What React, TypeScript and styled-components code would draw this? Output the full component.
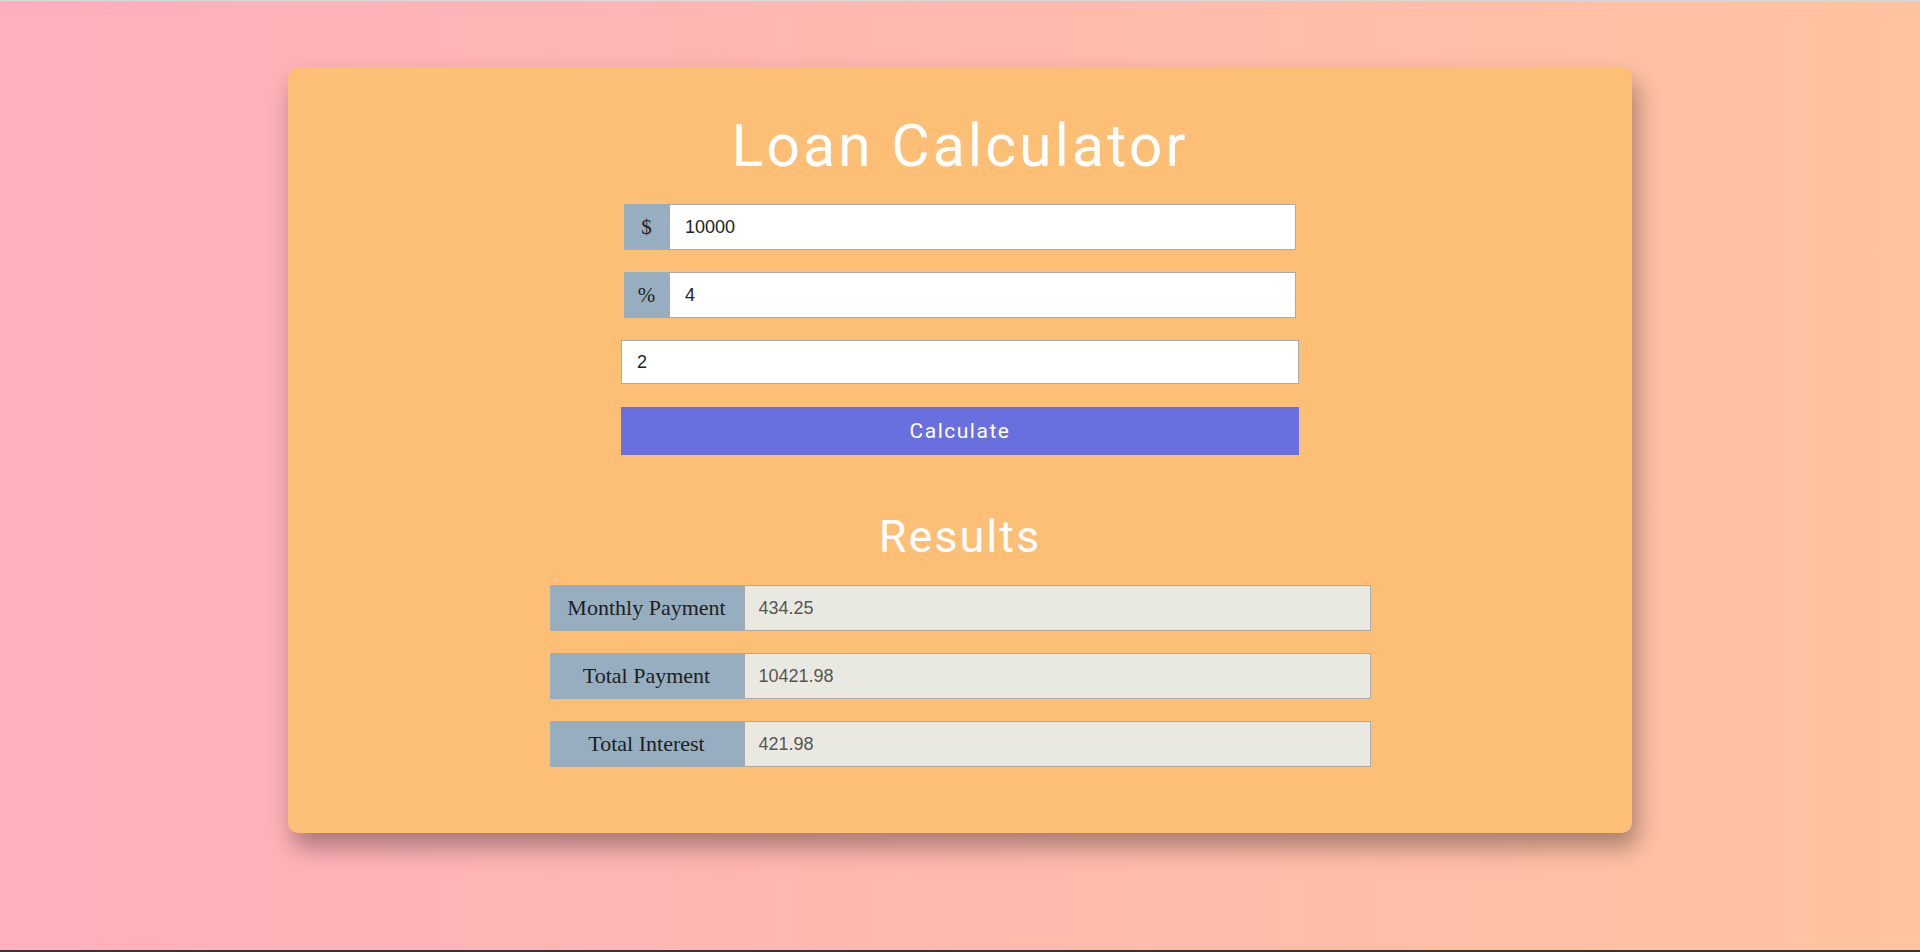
import React from "react";
import styled, { createGlobalStyle } from "styled-components";

const GlobalStyle = createGlobalStyle`
  * { box-sizing: border-box; }
  html {
    background: #343434;
    height: 952px;
  }
  body {
    margin: 0;
    height: 950px;
    border-top: 1px solid #d9d9d9;
    background: linear-gradient(to right, #ffafbd, #ffc3a0);
    font-family: "Liberation Serif", "Times New Roman", serif;
  }
`;

const Page = styled.div`
  padding-top: 66px;
`;

const Card = styled.main`
  width: 1344px;
  margin: 0 auto;
  background: #fdbe76;
  border-radius: 10px;
  box-shadow: 5px 14px 24px rgba(0, 0, 0, 0.34);
  padding: 49px 0 66px;
  display: flex;
  flex-direction: column;
  align-items: center;
`;

const Title = styled.h1`
  margin: 0 0 29px;
  font-family: Roboto, "Liberation Sans", sans-serif;
  font-weight: 400;
  font-size: 59px;
  line-height: 1;
  letter-spacing: 3px;
  color: #ffffff;
`;

const Form = styled.form`
  display: flex;
  flex-direction: column;
  align-items: center;
  gap: 22px;
`;

const InputGroup = styled.div`
  display: flex;
  width: 672px;
  height: 46px;
`;

const Prepend = styled.span`
  width: 45px;
  flex: none;
  display: flex;
  align-items: center;
  justify-content: center;
  background: #97aec0;
  color: #222;
  font-family: "Liberation Serif", "Times New Roman", serif;
  font-size: 21px;
`;

const Field = styled.input<{ $full?: boolean }>`
  flex: ${(p) => (p.$full ? "none" : "1")};
  min-width: 0;
  width: ${(p) => (p.$full ? "678px" : "auto")};
  height: ${(p) => (p.$full ? "44px" : "46px")};
  border: 1px solid #aaaaaa;
  background: #ffffff;
  padding: 0 15px;
  font-family: "Liberation Sans", Arial, sans-serif;
  font-size: 18px;
  color: #222;
  outline: none;
`;

const CalcButton = styled.button`
  width: 678px;
  height: 48px;
  margin-top: 1px;
  border: none;
  background: #6a6fe0;
  color: #ffffff;
  font-family: Roboto, "Liberation Sans", sans-serif;
  font-size: 21px;
  letter-spacing: 1.5px;
  cursor: pointer;
`;

const ResultsTitle = styled.h2`
  margin: 59px 0 26px;
  font-family: Roboto, "Liberation Sans", sans-serif;
  font-weight: 400;
  font-size: 45px;
  line-height: 1;
  letter-spacing: 2px;
  color: #ffffff;
`;

const Results = styled.section`
  display: flex;
  flex-direction: column;
  gap: 22px;
`;

const ResultRow = styled.div`
  display: flex;
  width: 821px;
  height: 46px;
`;

const ResultLabel = styled.span`
  width: 194px;
  flex: none;
  display: flex;
  align-items: center;
  justify-content: center;
  background: #97aec0;
  color: #1e1e1e;
  font-family: "Liberation Serif", "Times New Roman", serif;
  font-size: 22px;
`;

const ResultValue = styled.input`
  flex: 1;
  min-width: 0;
  height: 46px;
  border: 1px solid #aaaaaa;
  background: #eae9e1;
  padding: 0 14px;
  font-family: "Liberation Sans", Arial, sans-serif;
  font-size: 18px;
  color: #555;
  outline: none;
`;

const results = [
  { label: "Monthly Payment", value: "434.25" },
  { label: "Total Payment", value: "10421.98" },
  { label: "Total Interest", value: "421.98" },
];

export default function App() {
  return (
    <>
      <GlobalStyle />
      <Page>
        <Card>
          <Title>Loan Calculator</Title>
          <Form onSubmit={(e) => e.preventDefault()}>
            <InputGroup>
              <Prepend>$</Prepend>
              <Field type="text" defaultValue="10000" />
            </InputGroup>
            <InputGroup>
              <Prepend>%</Prepend>
              <Field type="text" defaultValue="4" />
            </InputGroup>
            <Field $full type="text" defaultValue="2" />
            <CalcButton type="submit">Calculate</CalcButton>
          </Form>
          <ResultsTitle>Results</ResultsTitle>
          <Results>
            {results.map((r) => (
              <ResultRow key={r.label}>
                <ResultLabel>{r.label}</ResultLabel>
                <ResultValue type="text" readOnly value={r.value} />
              </ResultRow>
            ))}
          </Results>
        </Card>
      </Page>
    </>
  );
}
